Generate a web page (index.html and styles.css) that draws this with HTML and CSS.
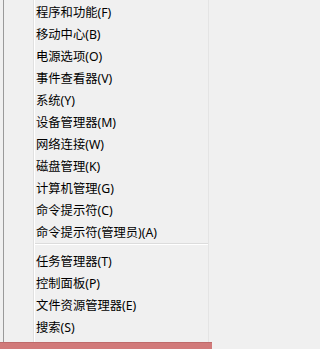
FILE: index.html
```html
<!DOCTYPE html>
<html lang="zh-CN">
<head>
<meta charset="utf-8">
<title>Win+X 菜单</title>
<link rel="stylesheet" href="styles.css">
</head>
<body>
<div class="screen">
  <div class="menu">
    <ul class="group group-first">
      <li class="item">程序和功能(F)</li>
      <li class="item">移动中心(B)</li>
      <li class="item">电源选项(O)</li>
      <li class="item">事件查看器(V)</li>
      <li class="item">系统(Y)</li>
      <li class="item">设备管理器(M)</li>
      <li class="item">网络连接(W)</li>
      <li class="item">磁盘管理(K)</li>
      <li class="item">计算机管理(G)</li>
      <li class="item">命令提示符(C)</li>
      <li class="item">命令提示符(管理员)(A)</li>
    </ul>
    <div class="separator"></div>
    <ul class="group group-second">
      <li class="item">任务管理器(T)</li>
      <li class="item">控制面板(P)</li>
      <li class="item">文件资源管理器(E)</li>
      <li class="item">搜索(S)</li>
    </ul>
  </div>
  <div class="taskbar"></div>
</div>
</body>
</html>
```
FILE: styles.css
```css
html, body {
  margin: 0;
  padding: 0;
  background: #f0f0f0;
}

.screen {
  width: 212px;
  height: 349px;
  display: flex;
  flex-direction: column;
  overflow: hidden;
  font-family: "Noto Sans", "Noto Sans CJK SC", sans-serif;
  font-size: 12.3px;
  color: #000;
}

.menu {
  height: 342px;
  margin-left: 3px;
  width: 206px;
  border-left: 1px solid #9a9a9a;
  border-right: 1px solid #e4e4e4;
  background: #f0f0f0;
  display: flex;
  flex-direction: column;
  box-sizing: border-box;
  padding-left: 29px;
  position: relative;
}

.menu::before {
  content: "";
  position: absolute;
  left: 29px;
  top: 0;
  bottom: 0;
  width: 1px;
  background: #e0e0e0;
  box-shadow: 1px 0 0 #ffffff;
}

.group {
  list-style: none;
  margin: 0;
  padding: 0 0 0 3px;
}

.group-first {
  padding-top: 2px;
}

.group-second {
  padding-top: 6px;
}

.item {
  height: 22px;
  line-height: 22px;
  white-space: nowrap;
}

.separator {
  height: 1px;
  background: #dcdcdc;
  border-bottom: 1px solid #ffffff;
  margin-top: -1px;
}

.taskbar {
  flex: 1;
  background: #d17a7a;
  border-top: 1px solid #bf6b6b;
}
```
